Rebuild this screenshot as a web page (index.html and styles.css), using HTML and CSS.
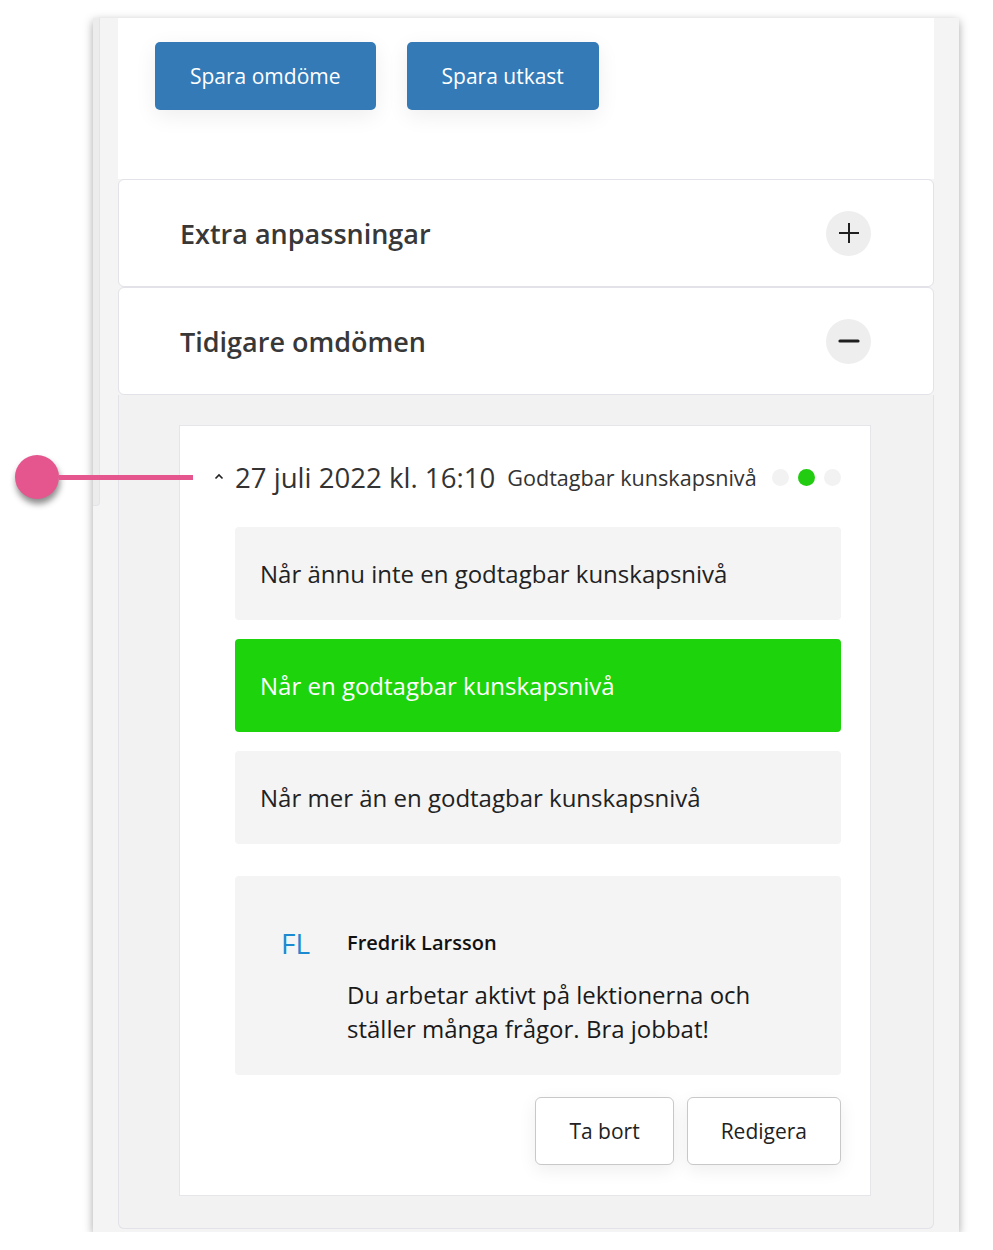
FILE: index.html
```html
<!DOCTYPE html>
<html>
<head>
  <title>Tidigare omdömen</title>
  <link rel="stylesheet" href="styles.css">
</head>
<body>
  <div class="frame">
    <div class="gutter">
      <div class="edge"></div>
    </div>

    <main class="page">
      <div class="actions">
        <button class="btn-primary">Spara omdöme</button>
        <button class="btn-primary">Spara utkast</button>
      </div>

      <section class="panel">
        <h2>Extra anpassningar</h2>
        <span class="toggle">
          <svg width="22" height="22" viewBox="0 0 22 22"><path d="M11 1v20M1 11h20" stroke="#1f1f1f" stroke-width="2"/></svg>
        </span>
      </section>

      <section class="panel">
        <h2>Tidigare omdömen</h2>
        <span class="toggle">
          <svg width="22" height="22" viewBox="0 0 22 22"><path d="M2 11h18" stroke="#1f1f1f" stroke-width="3.2" stroke-linecap="round"/></svg>
        </span>
      </section>

      <div class="history">
        <div class="entry">
          <div class="entry-head">
            <svg class="caret" width="10" height="7" viewBox="0 0 10 7"><path d="M1.5 5.5L5 2l3.5 3.5" fill="none" stroke="#222" stroke-width="1.6"/></svg>
            <span class="date">27 juli 2022 kl. 16:10</span>
            <span class="level">Godtagbar kunskapsnivå</span>
            <span class="dots">
              <span class="dot"></span>
              <span class="dot on"></span>
              <span class="dot"></span>
            </span>
          </div>

          <div class="options">
            <div class="option">Når ännu inte en godtagbar kunskapsnivå</div>
            <div class="option selected">Når en godtagbar kunskapsnivå</div>
            <div class="option">Når mer än en godtagbar kunskapsnivå</div>
          </div>

          <div class="comment">
            <div class="initials">FL</div>
            <div class="comment-body">
              <div class="author">Fredrik Larsson</div>
              <p>Du arbetar aktivt på lektionerna och ställer många frågor. Bra jobbat!</p>
            </div>
          </div>

          <div class="entry-actions">
            <button class="btn-light">Ta bort</button>
            <button class="btn-light">Redigera</button>
          </div>
        </div>
      </div>
    </main>

    <div class="gutter"></div>
  </div>

  <div class="marker">
    <span class="marker-dot"></span>
    <span class="marker-line"></span>
  </div>
</body>
</html>
```

FILE: styles.css
```css
body {
  margin: 0;
  padding: 0;
  background-color: #fff;
  font-family: "Open Sans", "Noto Sans", sans-serif;
  color: #222;
}

.frame {
  display: flex;
  width: 866px;
  height: 1214px;
  margin: 18px 0 0 93px;
  background-color: #f4f4f4;
  box-shadow: 0 3px 9px rgba(0, 0, 0, 0.35);
}

.gutter {
  width: 25px;
  flex-shrink: 0;
}

.edge {
  width: 6px;
  height: 487px;
  background-color: #ececec;
  border-right: 1px solid #e4e4e8;
  border-bottom: 1px solid #e4e4e8;
  border-radius: 0 0 4px 0;
}

.page {
  width: 816px;
  display: flex;
  flex-direction: column;
}

.actions {
  display: flex;
  gap: 31px;
  height: 161px;
  flex-shrink: 0;
  box-sizing: border-box;
  padding: 24px 37px 0;
  background-color: #fff;
}

.btn-primary {
  height: 68px;
  padding: 0 35px;
  font-family: inherit;
  font-size: 21px;
  color: #fff;
  background-color: #337ab7;
  border: none;
  border-radius: 5px;
  box-shadow: 0 6px 22px rgba(0, 0, 0, 0.07);
  cursor: pointer;
}

.panel {
  display: flex;
  align-items: center;
  justify-content: space-between;
  height: 108px;
  flex-shrink: 0;
  box-sizing: border-box;
  padding: 0 62px 0 61px;
  background-color: #fff;
  border: 1px solid #e2e2e8;
  border-radius: 6px;
}

.panel h2 {
  margin: 0;
  font-size: 27px;
  font-weight: 600;
  color: #383838;
}

.toggle {
  display: flex;
  align-items: center;
  justify-content: center;
  width: 45px;
  height: 45px;
  border-radius: 50%;
  background-color: #eeeeee;
}

.history {
  flex: 1;
  margin-bottom: 3px;
  padding: 30px 62px 32px 60px;
  background-color: #f2f2f2;
  border: 1px solid #e2e2e8;
  border-top: none;
  border-radius: 0 0 6px 6px;
}

.entry {
  padding: 29px 29px 30px 55px;
  background-color: #fff;
  border: 1px solid #e6e6ea;
}

.entry-head {
  position: relative;
  display: flex;
  align-items: center;
  height: 44px;
}

.caret {
  position: absolute;
  left: -21px;
  top: 18px;
}

.date {
  font-size: 27.6px;
  color: #333;
}

.level {
  margin-left: 12px;
  font-size: 21.6px;
  color: #333;
}

.dots {
  display: flex;
  gap: 9px;
  margin-left: auto;
}

.dot {
  width: 17px;
  height: 17px;
  border-radius: 50%;
  background-color: #f2f2f2;
}

.dot.on {
  background-color: #22cc11;
}

.options {
  display: flex;
  flex-direction: column;
  gap: 19px;
  margin-top: 28px;
}

.option {
  display: flex;
  align-items: center;
  height: 93px;
  padding: 0 25px;
  font-size: 24px;
  color: #222;
  background-color: #f4f4f4;
  border-radius: 4px;
}

.option.selected {
  color: #fff;
  background-color: #1dd30c;
}

.comment {
  display: flex;
  margin-top: 32px;
  padding: 52px 60px 29px 46px;
  background-color: #f4f4f4;
  border-radius: 4px;
}

.initials {
  width: 66px;
  flex-shrink: 0;
  font-size: 28px;
  font-weight: 400;
  line-height: 30px;
  color: #1b8ad0;
}

.author {
  font-size: 20px;
  font-weight: 600;
  line-height: 30px;
  color: #111;
}

.comment-body p {
  margin: 20px 0 0;
  font-size: 24px;
  line-height: 34px;
  color: #1a1a1a;
}

.entry-actions {
  display: flex;
  justify-content: flex-end;
  gap: 13px;
  margin-top: 22px;
}

.btn-light {
  height: 68px;
  padding: 0 33px;
  font-family: inherit;
  font-size: 21px;
  color: #222;
  background-color: #fff;
  border: 1px solid #c8c8c8;
  border-radius: 6px;
  box-shadow: 0 5px 18px rgba(0, 0, 0, 0.07);
  cursor: pointer;
}

.marker {
  position: absolute;
  left: 15px;
  top: 455px;
  display: flex;
  align-items: center;
}

.marker-dot {
  width: 44px;
  height: 44px;
  border-radius: 50%;
  background-color: #e5558e;
  box-shadow: 1px 5px 6px rgba(0, 0, 0, 0.45);
}

.marker-line {
  width: 134px;
  height: 5px;
  background-color: #e5558e;
}
```
